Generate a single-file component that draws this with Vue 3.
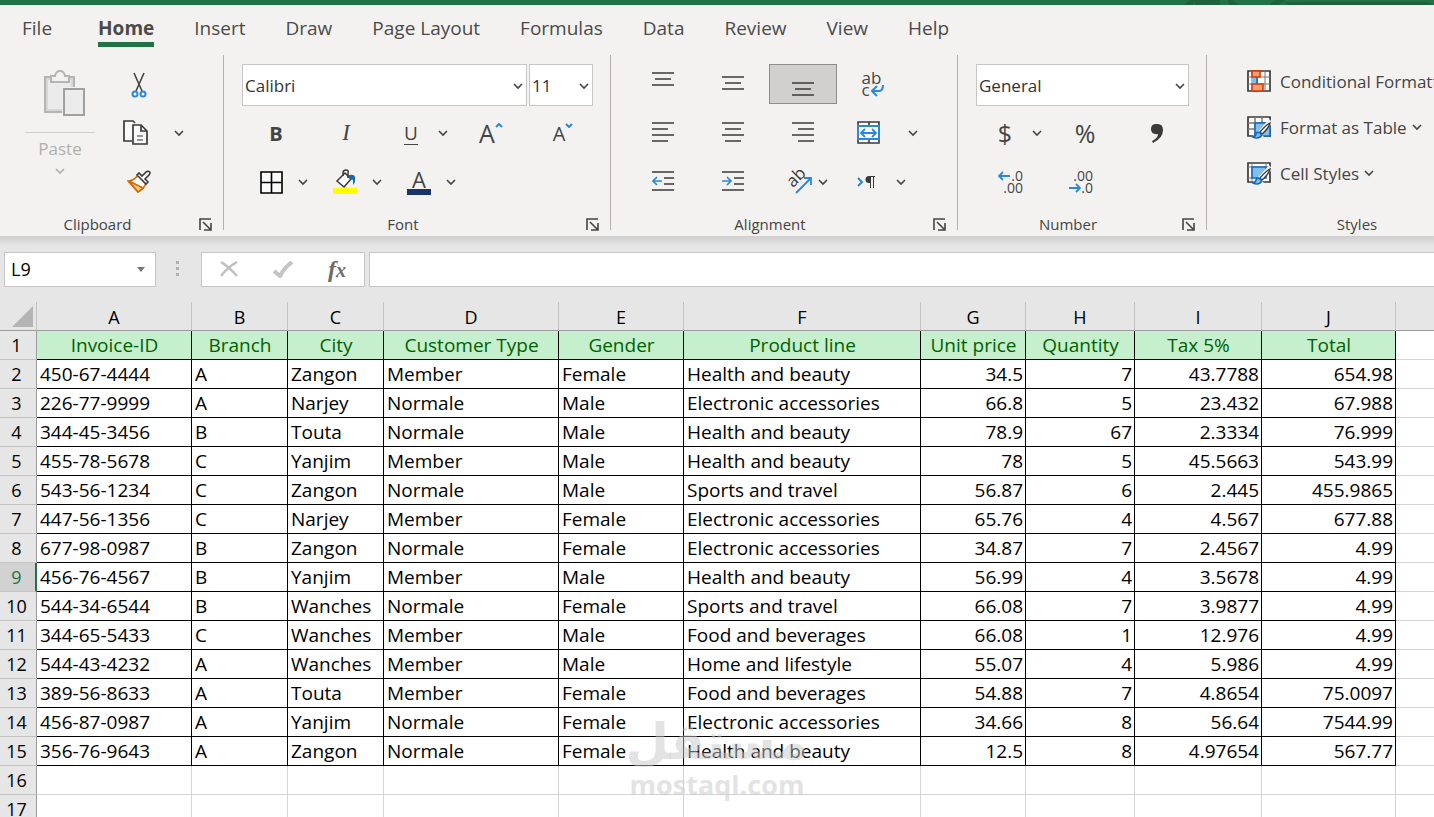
<script setup>
import { ref } from "vue";

const tabs = ["File", "Home", "Insert", "Draw", "Page Layout", "Formulas", "Data", "Review", "View", "Help"];
const activeTab = ref("Home");

const fontName = ref("Calibri");
const fontSize = ref("11");
const numberFormat = ref("General");
const cellName = ref("L9");
const formula = ref("");
const selectedRow = 9;

const columns = ["A", "B", "C", "D", "E", "F", "G", "H", "I", "J"];
const headings = [
  "Invoice-ID",
  "Branch",
  "City",
  "Customer Type",
  "Gender",
  "Product line",
  "Unit price",
  "Quantity",
  "Tax 5%",
  "Total",
];

const rows = [
  ["450-67-4444", "A", "Zangon", "Member", "Female", "Health and beauty", "34.5", "7", "43.7788", "654.98"],
  ["226-77-9999", "A", "Narjey", "Normale", "Male", "Electronic accessories", "66.8", "5", "23.432", "67.988"],
  ["344-45-3456", "B", "Touta", "Normale", "Male", "Health and beauty", "78.9", "67", "2.3334", "76.999"],
  ["455-78-5678", "C", "Yanjim", "Member", "Male", "Health and beauty", "78", "5", "45.5663", "543.99"],
  ["543-56-1234", "C", "Zangon", "Normale", "Male", "Sports and travel", "56.87", "6", "2.445", "455.9865"],
  ["447-56-1356", "C", "Narjey", "Member", "Female", "Electronic accessories", "65.76", "4", "4.567", "677.88"],
  ["677-98-0987", "B", "Zangon", "Normale", "Female", "Electronic accessories", "34.87", "7", "2.4567", "4.99"],
  ["456-76-4567", "B", "Yanjim", "Member", "Male", "Health and beauty", "56.99", "4", "3.5678", "4.99"],
  ["544-34-6544", "B", "Wanches", "Normale", "Female", "Sports and travel", "66.08", "7", "3.9877", "4.99"],
  ["344-65-5433", "C", "Wanches", "Member", "Male", "Food and beverages", "66.08", "1", "12.976", "4.99"],
  ["544-43-4232", "A", "Wanches", "Member", "Male", "Home and lifestyle", "55.07", "4", "5.986", "4.99"],
  ["389-56-8633", "A", "Touta", "Member", "Female", "Food and beverages", "54.88", "7", "4.8654", "75.0097"],
  ["456-87-0987", "A", "Yanjim", "Normale", "Female", "Electronic accessories", "34.66", "8", "56.64", "7544.99"],
  ["356-76-9643", "A", "Zangon", "Normale", "Female", "Health and beauty", "12.5", "8", "4.97654", "567.77"],
];
</script>

<template>
  <div class="excel">
    <div class="title-strip">
      <svg width="250" height="5" viewBox="0 0 250 5" aria-hidden="true">
        <path d="M0 5Q3 1 7 0H15Q10 2 9 5ZM11 5V0H36V5ZM44 0H48Q53 2 54 5H45ZM86 5Q87 1 92 0H100L102 2H240Q246 2 250 5H104Q102 1 98 2L94 5Z" fill="#1f613c" />
      </svg>
    </div>

    <nav class="tabs">
      <a v-for="tab in tabs" :key="tab" href="#" :class="{ active: tab === activeTab }" @click.prevent="activeTab = tab">{{ tab }}</a>
    </nav>

    <div class="ribbon">
      <section class="group clipboard">
        <div class="clipboard-body">
          <button class="paste" aria-label="Paste" disabled>
            <svg class="paste-icon" width="42" height="46" viewBox="0 0 42 46">
              <path d="M2 7H31V42H2Z" fill="#ebebeb" stroke="#b4b4b4" stroke-width="2" />
              <path d="M4 9H29V40H4Z" fill="none" stroke="#d6d6d6" stroke-width="2" />
              <path d="M8 12V6H12Q13 1 17 1T22 6H26V12Z" fill="#f3f2f1" stroke="#b4b4b4" stroke-width="2" />
              <path d="M19 17H42V46H19Z" fill="#f3f2f1" />
              <path d="M21 19H41V45H21Z" fill="#ececec" stroke="#a0a0a0" stroke-width="2" />
            </svg>
            <span class="paste-label">Paste</span>
            <svg class="chev" width="10" height="7" viewBox="0 0 10 7"><path d="M1 1l4 4 4-4" /></svg>
          </button>
          <div class="clipboard-tools">
            <div class="row">
              <button class="btn w60" aria-label="Cut">
                <svg width="16" height="26" viewBox="0 0 16 26">
                  <path d="M3 1L11 19M13 1L5 19" fill="none" stroke="#444" stroke-width="1.600" />
                  <circle cx="4" cy="22" r="2.5" fill="#fff" stroke="#2b88d8" stroke-width="2" />
                  <circle cx="12" cy="22" r="2.5" fill="#fff" stroke="#2b88d8" stroke-width="2" />
                </svg>
              </button>
            </div>
            <div class="row">
              <button class="btn w60" aria-label="Copy">
                <svg width="32" height="26" viewBox="0 0 32 26" fill="#fafafa" stroke="#3b3a39" stroke-width="1.700">
                  <path d="M12 3L10 1H1V21H9" />
                  <path d="M10 5H18L24 11V24H10Z" />
                  <path d="M18 5V11H24" fill="none" />
                  <path d="M14 16H20M14 20H20" stroke="#797775" />
                </svg>
              </button>
              <button class="btn arrow" aria-label="Copy options">
                <svg class="chev" width="10" height="7" viewBox="0 0 10 7"><path d="M1 1l4 4 4-4" /></svg>
              </button>
            </div>
            <div class="row">
              <button class="btn w60" aria-label="Format Painter">
                <svg width="24" height="24" viewBox="0 0 24 24" stroke-width="1.600">
                  <path d="M1 11Q7 11 11 5L19 13Q17 19 11 22Z" fill="#fff" stroke="#d06b0c" />
                  <path d="M2 11L16 18L11 22Z" fill="#fbc97f" stroke="#d06b0c" />
                  <path d="M10 5L19 14L21 12L18 9L22 5Q24 2 22 1.500T19 2L15 6L12 3Z" fill="#fff" stroke="#3b3a39" />
                </svg>
              </button>
            </div>
          </div>
        </div>
        <div class="group-footer">
          <span>Clipboard</span>
          <button class="launcher" aria-label="Clipboard settings">
            <svg width="13" height="13" viewBox="0 0 13 13"><path d="M1 12V1H12M4 4L11 11M12 5V12H5" /></svg>
          </button>
        </div>
      </section>
      <div class="divider"></div>

      <section class="group font-group">
        <div class="row">
          <div class="combo name">
            <select v-model="fontName" aria-label="Font">
              <option>Calibri</option>
            </select>
            <svg class="chev" width="10" height="7" viewBox="0 0 10 7"><path d="M1 1l4 4 4-4" /></svg>
          </div>
          <div class="combo size">
            <select v-model="fontSize" aria-label="Font size">
              <option>11</option>
            </select>
            <svg class="chev" width="10" height="7" viewBox="0 0 10 7"><path d="M1 1l4 4 4-4" /></svg>
          </div>
        </div>
        <div class="row">
          <button class="btn w68 bold">B</button>
          <button class="btn w68 italic">I</button>
          <div class="split indent">
            <button class="btn w44 underline"><span>U</span></button>
            <button class="btn arrow" aria-label="Underline options">
              <svg class="chev" width="10" height="7" viewBox="0 0 10 7"><path d="M1 1l4 4 4-4" /></svg>
            </button>
          </div>
          <button class="btn w68 grow" aria-label="Increase font size">
            <span>A</span>
            <svg width="8" height="5" viewBox="0 0 8 5"><path d="M1 4L4 1L7 4" fill="none" stroke="#2b88d8" stroke-width="2" /></svg>
          </button>
          <button class="btn w68 grow shrink" aria-label="Decrease font size">
            <span>A</span>
            <svg width="8" height="5" viewBox="0 0 8 5"><path d="M1 1L4 4L7 1" fill="none" stroke="#2b88d8" stroke-width="2" /></svg>
          </button>
        </div>
        <div class="row splits">
          <div class="split">
            <button class="btn w44" aria-label="Borders">
              <svg width="24" height="24" viewBox="0 0 24 24"><path d="M2 2H23V23H2ZM12.500 2V23M2 12.500H23" fill="#fafafa" stroke="#000" stroke-width="1.600" /></svg>
            </button>
            <button class="btn arrow" aria-label="Border options">
              <svg class="chev" width="10" height="7" viewBox="0 0 10 7"><path d="M1 1l4 4 4-4" /></svg>
            </button>
          </div>
          <div class="split">
            <button class="btn w44" aria-label="Fill colour">
              <svg width="24" height="26" viewBox="0 0 24 26">
                <path d="M4 12L12 4L18 10L11 18Z" fill="#fff" stroke="#3b3a39" stroke-width="1.500" />
                <path d="M10 7V4Q10 1 13 1T15 4V9" fill="none" stroke="#3b3a39" stroke-width="1.500" />
                <path d="M16 6Q23 5 22 10V13L20 16V11L16 9Z" fill="#0f6cbd" />
                <path d="M0 19H24V25H0Z" fill="#ff0" />
              </svg>
            </button>
            <button class="btn arrow" aria-label="Fill options">
              <svg class="chev" width="10" height="7" viewBox="0 0 10 7"><path d="M1 1l4 4 4-4" /></svg>
            </button>
          </div>
          <div class="split">
            <button class="btn w44 font-color"><span>A</span></button>
            <button class="btn arrow" aria-label="Font colour options">
              <svg class="chev" width="10" height="7" viewBox="0 0 10 7"><path d="M1 1l4 4 4-4" /></svg>
            </button>
          </div>
        </div>
        <div class="group-footer">
          <span>Font</span>
          <button class="launcher" aria-label="Font settings">
            <svg width="13" height="13" viewBox="0 0 13 13"><path d="M1 12V1H12M4 4L11 11M12 5V12H5" /></svg>
          </button>
        </div>
      </section>
      <div class="divider"></div>

      <section class="group alignment">
        <div class="row top">
          <button class="btn w68" aria-label="Top align">
            <svg class="lines" width="22" height="26" viewBox="0 0 22 26"><path d="M0 2H22M3 8H19M0 14H22" /></svg>
          </button>
          <button class="btn w68" aria-label="Middle align">
            <svg class="lines" width="22" height="26" viewBox="0 0 22 26"><path d="M0 6H22M3 12H19M0 18H22" /></svg>
          </button>
          <button class="btn w68 pressed" aria-label="Bottom align">
            <svg class="lines" width="22" height="26" viewBox="0 0 22 26"><path d="M0 12H22M3 18H19M0 24H22" /></svg>
          </button>
          <button class="btn w68 wrap" aria-label="Wrap text">
            <span>ab<br />c</span>
            <svg width="13" height="14" viewBox="0 0 13 14"><path d="M6 2L1 7L6 12M2 7H8Q12 7 12 1" fill="none" stroke="#2b88d8" stroke-width="2" /></svg>
          </button>
        </div>
        <div class="row">
          <button class="btn w68" aria-label="Align left">
            <svg class="lines" width="22" height="22" viewBox="0 0 22 22"><path d="M0 1H22M0 7H16M0 13H22M0 19H16" /></svg>
          </button>
          <button class="btn w68" aria-label="Centre">
            <svg class="lines" width="22" height="22" viewBox="0 0 22 22"><path d="M0 1H22M3 7H19M0 13H22M3 19H19" /></svg>
          </button>
          <button class="btn w68" aria-label="Align right">
            <svg class="lines" width="22" height="22" viewBox="0 0 22 22"><path d="M0 1H22M6 7H22M0 13H22M6 19H22" /></svg>
          </button>
          <button class="btn w60" aria-label="Merge and centre">
            <svg width="24" height="24" viewBox="0 0 24 24" fill="none">
              <path d="M1 1H22V22H1ZM12 1V6M12 17V22" fill="#fafafa" stroke="#3b3a39" stroke-width="1.600" />
              <path d="M1 5H22V18H1Z" fill="#fff" stroke="#2b88d8" stroke-width="2" />
              <path d="M4 12H19M8 8L4 12L8 16M15 8L19 12L15 16" stroke="#2b88d8" stroke-width="1.800" />
            </svg>
          </button>
          <button class="btn arrow" aria-label="Merge options">
            <svg class="chev" width="10" height="7" viewBox="0 0 10 7"><path d="M1 1l4 4 4-4" /></svg>
          </button>
        </div>
        <div class="row">
          <button class="btn w68" aria-label="Decrease indent">
            <svg class="lines" width="22" height="22" viewBox="0 0 22 22">
              <path d="M0 1H22M12 7H22M12 13H22M0 19H22" />
              <path class="blue" d="M1 10H10M5 6L1 10L5 14" />
            </svg>
          </button>
          <button class="btn w68" aria-label="Increase indent">
            <svg class="lines" width="22" height="22" viewBox="0 0 22 22">
              <path d="M0 1H22M12 7H22M12 13H22M0 19H22" />
              <path class="blue" d="M0 10H9M5 6L9 10L5 14" />
            </svg>
          </button>
          <div class="split orientation">
            <button class="btn" aria-label="Orientation">
              <svg width="26" height="24" viewBox="0 0 26 24">
                <text x="-8" y="5" transform="translate(8 9) rotate(-45)" font-size="17" fill="#3b3a39">ab</text>
                <path d="M9 23L24 8M17 8H24V15" fill="none" stroke="#2b88d8" stroke-width="1.800" />
              </svg>
            </button>
            <button class="btn arrow" aria-label="Orientation options">
              <svg class="chev" width="10" height="7" viewBox="0 0 10 7"><path d="M1 1l4 4 4-4" /></svg>
            </button>
          </div>
          <div class="split">
            <button class="btn w52" aria-label="Text direction">
              <svg width="20" height="16" viewBox="0 0 20 16">
                <path d="M3 4L7 8L3 12" fill="none" stroke="#2b88d8" stroke-width="2" />
                <path d="M20 2.500H14M15.500 2V14M18.500 2V14" fill="none" stroke="#3b3a39" stroke-width="1" />
                <path d="M16 2H14Q10.500 2 10.500 5.500T14 9H16Z" fill="#3b3a39" />
              </svg>
            </button>
            <button class="btn arrow" aria-label="Text direction options">
              <svg class="chev" width="10" height="7" viewBox="0 0 10 7"><path d="M1 1l4 4 4-4" /></svg>
            </button>
          </div>
        </div>
        <div class="group-footer">
          <span>Alignment</span>
          <button class="launcher" aria-label="Alignment settings">
            <svg width="13" height="13" viewBox="0 0 13 13"><path d="M1 12V1H12M4 4L11 11M12 5V12H5" /></svg>
          </button>
        </div>
      </section>
      <div class="divider"></div>

      <section class="group number">
        <div class="row">
          <div class="combo format">
            <select v-model="numberFormat" aria-label="Number format">
              <option>General</option>
            </select>
            <svg class="chev" width="10" height="7" viewBox="0 0 10 7"><path d="M1 1l4 4 4-4" /></svg>
          </div>
        </div>
        <div class="row">
          <div class="split indent">
            <button class="btn w44 symbol">$</button>
            <button class="btn arrow" aria-label="Accounting options">
              <svg class="chev" width="10" height="7" viewBox="0 0 10 7"><path d="M1 1l4 4 4-4" /></svg>
            </button>
          </div>
          <button class="btn w72 symbol">%</button>
          <button class="btn w68" aria-label="Comma style">
            <svg width="12" height="20" viewBox="0 0 12 20"><path d="M5 1Q12 0 12 7Q12 15 2 20L1 18Q7 15 7 11Q0 12 0 6Q0 1 5 1Z" fill="#3b3a39" /></svg>
          </button>
        </div>
        <div class="row">
          <button class="btn w68 decimals" aria-label="Increase decimal">
            <span class="line">
              <svg width="13" height="10" viewBox="0 0 13 10"><path d="M12 5H1M5 1L1 5L5 9" /></svg>.0
            </span>
            <span class="line">.00</span>
          </button>
          <button class="btn w68 decimals" aria-label="Decrease decimal">
            <span class="line">.00</span>
            <span class="line">
              <svg width="13" height="10" viewBox="0 0 13 10"><path d="M1 5H12M8 1L12 5L8 9" /></svg>.0
            </span>
          </button>
        </div>
        <div class="group-footer">
          <span>Number</span>
          <button class="launcher" aria-label="Number settings">
            <svg width="13" height="13" viewBox="0 0 13 13"><path d="M1 12V1H12M4 4L11 11M12 5V12H5" /></svg>
          </button>
        </div>
      </section>
      <div class="divider"></div>

      <section class="group styles">
        <div class="style-list">
          <button class="btn style-btn">
            <svg width="26" height="24" viewBox="0 0 26 24">
              <path d="M1 2H23V22H1Z" fill="#fff" stroke="#3b3a39" stroke-width="1.700" />
              <path d="M5 2V22M18 2V22M1 8H23M1 15H23" stroke="#797775" stroke-width="1" />
              <path d="M5 8H11V15H5Z" fill="#83beec" />
              <path d="M10 8V15" stroke="#0f6cbd" stroke-width="1.600" />
              <path d="M5 2H13V8H5ZM5 15H16V22H5Z" fill="#f09e77" stroke="#d83b01" stroke-width="1.600" />
            </svg>
            <span>Conditional Formatting</span>
          </button>
          <button class="btn style-btn">
            <svg width="26" height="24" viewBox="0 0 26 24">
              <path d="M1 2H23V21H1Z" fill="#fff" stroke="#3b3a39" stroke-width="1.700" />
              <path d="M8 2V21M15 2V8M1 8H23M1 14H8" stroke="#797775" stroke-width="1.500" />
              <path d="M8 8H23V21H8Z" fill="#83beec" stroke="#0f6cbd" stroke-width="1.600" />
              <path d="M24 6L13 18M6 23H12L15 20" stroke="#f3f2f1" stroke-width="5" fill="none" />
              <path d="M23 8Q19 10 13 17L15 19Q22 13 23 8Z" fill="#fff" stroke="#3b3a39" stroke-width="1.300" />
              <path d="M6 22Q9 21 9 19Q10 16 13 18T13 22Q10 24 6 22Z" fill="#83beec" stroke="#0f6cbd" stroke-width="1.600" />
            </svg>
            <span>Format as Table</span>
            <svg class="chev" width="10" height="7" viewBox="0 0 10 7"><path d="M1 1l4 4 4-4" /></svg>
          </button>
          <button class="btn style-btn">
            <svg width="26" height="24" viewBox="0 0 26 24">
              <path d="M1 2H23V21H1Z" fill="#fff" stroke="#3b3a39" stroke-width="1.700" />
              <path d="M5 2V21M19 2V6M1 6H23M1 17H5" stroke="#797775" stroke-width="1" />
              <path d="M5 6H19V17H5Z" fill="#83beec" stroke="#0f6cbd" stroke-width="1.600" />
              <path d="M24 6L13 18M6 23H12L15 20" stroke="#f3f2f1" stroke-width="5" fill="none" />
              <path d="M23 8Q19 10 13 17L15 19Q22 13 23 8Z" fill="#fff" stroke="#3b3a39" stroke-width="1.300" />
              <path d="M6 22Q9 21 9 19Q10 16 13 18T13 22Q10 24 6 22Z" fill="#83beec" stroke="#0f6cbd" stroke-width="1.600" />
            </svg>
            <span>Cell Styles</span>
            <svg class="chev" width="10" height="7" viewBox="0 0 10 7"><path d="M1 1l4 4 4-4" /></svg>
          </button>
        </div>
        <div class="group-footer"><span>Styles</span></div>
      </section>
    </div>

    <div class="formula-bar">
      <div class="name-box">
        <input v-model="cellName" type="text" aria-label="Name box" />
        <svg width="8" height="5" viewBox="0 0 8 5"><path d="M0 0H8L4 5Z" fill="#777" /></svg>
      </div>
      <svg class="grip" width="3" height="16" viewBox="0 0 3 16"><path d="M0 0H3V3H0ZM0 6H3V9H0ZM0 12H3V15H0Z" fill="#b0b0b0" /></svg>
      <div class="formula-tools">
        <button aria-label="Cancel">
          <svg width="18" height="16" viewBox="0 0 18 16"><path d="M1 1Q9 6 17 15M17 1Q8 6 1 15" fill="none" stroke="#c0c0c0" stroke-width="2.500" /></svg>
        </button>
        <button aria-label="Enter">
          <svg width="20" height="17" viewBox="0 0 20 17"><path d="M1 10L7 15Q11 7 19 1" fill="none" stroke="#c4c4c4" stroke-width="4" /></svg>
        </button>
        <button class="fx" aria-label="Insert function">f<sub>x</sub></button>
      </div>
      <input v-model="formula" class="formula-input" type="text" aria-label="Formula" />
    </div>

    <main class="sheet">
      <table>
        <colgroup>
          <col class="c-row" />
          <col v-for="c in columns" :key="c" :class="'c-' + c" />
          <col />
        </colgroup>
        <thead>
          <tr>
            <th class="corner"><svg width="21" height="21" viewBox="0 0 21 21"><path d="M21 0V21H0Z" fill="#b4b4b4" /></svg></th>
            <th v-for="c in columns" :key="c">{{ c }}</th>
            <th class="last"></th>
          </tr>
        </thead>
        <tbody>
          <tr class="headings">
            <th>1</th>
            <td v-for="h in headings" :key="h">{{ h }}</td>
            <td class="blank"></td>
          </tr>
          <tr v-for="(row, r) in rows" :key="row[0]" :class="{ selected: r + 2 === selectedRow }">
            <th>{{ r + 2 }}</th>
            <td v-for="(value, i) in row" :key="i" :class="{ num: i > 5 }">{{ value }}</td>
            <td class="blank"></td>
          </tr>
          <tr v-for="n in 2" :key="'empty' + n">
            <th>{{ n + 15 }}</th>
            <td v-for="i in 11" :key="i" class="blank"></td>
          </tr>
        </tbody>
      </table>
    </main>

    <div class="watermark">
      <span class="arabic" lang="ar">مستقل</span>
      <span class="latin">mostaql.com</span>
    </div>
  </div>
</template>

<style>
body {
  margin: 0;
  background: #fff;
}
</style>

<style scoped>
.excel {
  position: relative;
  display: flex;
  flex-direction: column;
  height: 100vh;
  overflow: hidden;
  background: #fff;
  color: #444;
  font-family: "Open Sans", "Noto Sans", sans-serif;
}

button,
input,
select {
  margin: 0;
  padding: 0;
  border: none;
  background: none;
  color: inherit;
  font: inherit;
}

svg {
  flex-shrink: 0;
}

.title-strip {
  display: flex;
  flex-shrink: 0;
  justify-content: flex-end;
  height: 5px;
  background: #217346;
}

.tabs {
  display: flex;
  flex-shrink: 0;
  gap: 40px;
  height: 50px;
  padding: 0 22px;
  background: #f3f2f1;
}

.tabs a {
  height: 37px;
  border-bottom: 5px solid transparent;
  color: #4c4a48;
  font-size: 19px;
  line-height: 46px;
  text-decoration: none;
  white-space: nowrap;
}

.tabs a:first-child {
  margin-right: 6px;
}

.tabs a.active {
  border-color: #217346;
  font-weight: 700;
}

.ribbon {
  display: flex;
  flex-shrink: 0;
  height: 181px;
  overflow: hidden;
  background: #f3f2f1;
}

.divider {
  flex-shrink: 0;
  width: 1px;
  height: 175px;
  background: #b3b0ad;
}

.group {
  display: grid;
  flex-shrink: 0;
  box-sizing: border-box;
  grid-template-rows: 42px 54px 44px 32px;
  padding-top: 9px;
}

.clipboard {
  width: 223px;
}

.font-group {
  width: 386px;
}

.alignment {
  width: 346px;
}

.number {
  width: 248px;
}

.styles {
  width: 300px;
}

.row {
  display: flex;
  align-items: center;
  gap: 2px;
  padding-left: 18px;
}

.row.top {
  align-items: flex-start;
}

.row.splits {
  gap: 10px;
  padding-left: 25px;
}

.split {
  display: flex;
  align-items: center;
}

.split.indent {
  padding-left: 7px;
}

.btn {
  display: flex;
  align-items: center;
  justify-content: center;
  height: 40px;
}

.w44 {
  width: 44px;
}

.w52 {
  width: 52px;
}

.w60 {
  width: 60px;
}

.w68 {
  width: 68px;
}

.w72 {
  width: 72px;
}

.arrow {
  width: 20px;
}

.alignment .w60 + .arrow {
  width: 24px;
}

.chev path {
  fill: none;
  stroke: #444;
  stroke-width: 1.6;
}

.group-footer {
  display: flex;
  align-items: center;
  padding-top: 8px;
  font-size: 15px;
  line-height: 24px;
}

.group-footer span {
  flex: 1;
  text-align: center;
}

.launcher {
  display: flex;
  align-items: center;
  justify-content: center;
  width: 20px;
  margin-right: 8px;
}

.launcher path {
  fill: none;
  stroke: #444;
  stroke-width: 1.6;
}

.clipboard-body {
  display: flex;
  grid-row: 1 / 4;
  gap: 14px;
  padding-left: 25px;
}

.paste {
  display: flex;
  flex-direction: column;
  align-items: center;
  width: 70px;
  padding-top: 6px;
  color: #b1afad;
  font-size: 17px;
}

.paste-icon {
  margin-left: 8px;
}

.paste-label {
  align-self: stretch;
  margin-top: 16px;
  padding-top: 4px;
  border-top: 1px solid #d2d0ce;
  line-height: 24px;
}

.paste .chev {
  margin-top: 7px;
}

.paste .chev path {
  stroke: #b1afad;
}

.clipboard-tools {
  display: grid;
  grid-template-rows: 42px 54px 44px;
}

.clipboard-tools .row {
  gap: 0;
  padding-left: 0;
}

.combo {
  position: relative;
  box-sizing: border-box;
  height: 42px;
  border: 1px solid #c8c6c4;
  background: #fff;
}

.combo select {
  width: 100%;
  height: 100%;
  padding-left: 2px;
  appearance: none;
  color: #333;
  font-size: 17px;
}

.combo .chev {
  position: absolute;
  top: 18px;
  right: 3px;
  pointer-events: none;
}

.combo.name {
  width: 285px;
}

.combo.size {
  width: 64px;
}

.combo.format {
  width: 213px;
}

.bold {
  font-size: 20px;
  font-weight: 700;
}

.italic {
  font-family: "Liberation Serif", serif;
  font-size: 23px;
  font-style: italic;
}

.underline {
  font-size: 19px;
}

.underline span {
  border-bottom: 1px solid #444;
  line-height: 22px;
}

.grow {
  align-items: flex-start;
  margin-left: 2px;
  font-size: 25px;
  line-height: 40px;
}

.grow svg {
  margin-top: 10px;
}

.shrink {
  font-size: 20px;
  line-height: 42px;
}

.font-color {
  font-size: 22px;
  line-height: 20px;
}

.font-color span {
  width: 24px;
  border-bottom: 6px solid #17356b;
}

.pressed {
  box-sizing: border-box;
  border: 1px solid #8f8d8b;
  background: #d2d0ce;
}

.lines path {
  fill: none;
  stroke: #3b3a39;
  stroke-width: 1.7;
}

.lines .blue {
  stroke: #2b88d8;
}

.wrap {
  font-size: 17px;
  line-height: 12px;
  text-align: left;
}

.wrap svg {
  margin-top: 13px;
  margin-left: -10px;
}

.orientation {
  justify-content: flex-end;
  width: 64px;
  padding-right: 4px;
}

.symbol {
  font-size: 25px;
}

.decimals {
  flex-direction: column;
  align-items: center;
  font-size: 14px;
  line-height: 12px;
}

.decimals .line {
  display: flex;
  align-items: center;
  justify-content: flex-end;
  width: 26px;
}

.decimals path {
  fill: none;
  stroke: #2b88d8;
  stroke-width: 1.8;
}

.style-list {
  grid-row: 1 / 4;
  margin-top: -6px;
  padding-left: 40px;
}

.style-btn {
  justify-content: flex-start;
  height: 46px;
  font-size: 17px;
  white-space: nowrap;
}

.style-btn span {
  margin: 0 5px 0 7px;
}

.formula-bar {
  display: flex;
  flex-shrink: 0;
  align-items: center;
  box-sizing: border-box;
  height: 66px;
  padding: 0 0 0 4px;
  background: linear-gradient(#cfcfcf, #e6e6e6 10px);
}

.name-box {
  display: flex;
  align-items: center;
  box-sizing: border-box;
  width: 152px;
  height: 35px;
  padding: 0 10px 0 6px;
  border: 1px solid #c6c6c6;
  background: #fff;
}

.name-box input {
  flex: 1;
  min-width: 0;
  color: #000;
  font-size: 18px;
}

.grip {
  margin: 0 22px 0 20px;
}

.formula-tools {
  display: flex;
  align-items: center;
  justify-content: space-around;
  box-sizing: border-box;
  width: 164px;
  height: 35px;
  border: 1px solid #c6c6c6;
  background: #fff;
}

.formula-tools button {
  display: flex;
  align-items: center;
  justify-content: center;
  width: 40px;
}

.formula-tools .fx {
  align-items: baseline;
  color: #6e6c66;
  font-family: "Liberation Serif", serif;
  font-size: 24px;
  font-style: italic;
  font-weight: 700;
  line-height: 28px;
}

.fx sub {
  font-size: 20px;
  line-height: 20px;
  vertical-align: baseline;
}

.formula-input {
  flex: 1;
  box-sizing: border-box;
  min-width: 0;
  height: 35px;
  margin-left: 4px;
  padding: 0 8px;
  border: 1px solid #c6c6c6;
  border-right: none;
  background: #fff;
}

.sheet table {
  width: 100%;
  border-spacing: 0;
  table-layout: fixed;
  color: #000;
  font-size: 19px;
}

.c-row {
  width: 37px;
}

.c-A {
  width: 155px;
}

.c-B,
.c-C {
  width: 96px;
}

.c-D {
  width: 175px;
}

.c-E {
  width: 125px;
}

.c-F {
  width: 237px;
}

.c-G {
  width: 105px;
}

.c-H {
  width: 109px;
}

.c-I {
  width: 127px;
}

.c-J {
  width: 134px;
}

th,
td {
  box-sizing: border-box;
  height: 29px;
  padding: 1px 2px 0 3px;
  border-right: 1px solid #000;
  border-bottom: 1px solid #000;
  line-height: 27px;
  white-space: nowrap;
}

th {
  padding: 1px 0 0;
  border-right-color: #9b9b9b;
  border-bottom-color: #c4c4c4;
  background: #e6e6e6;
  font-size: 18px;
  font-weight: 400;
}

thead th {
  padding-top: 3px;
  border-right-color: #c4c4c4;
  border-bottom-color: #9b9b9b;
  line-height: 25px;
}

th.last {
  border-right: none;
}

th.corner {
  padding: 0 3px 3px 0;
  line-height: 0;
  text-align: right;
  vertical-align: bottom;
}

tbody th {
  padding-right: 3px;
}

.headings td {
  background: #c6efce;
  color: #006100;
  text-align: center;
}

.num {
  text-align: right;
}

td.blank,
.headings td.blank {
  border-color: #d4d4d4;
  background: #fff;
}

td.blank:last-child {
  border-right: none;
}

.selected th {
  padding-right: 2px;
  border-right: 2px solid #217346;
  background: #d2d2d2;
  color: #217346;
}

.watermark {
  position: absolute;
  top: 714px;
  left: 50%;
  display: flex;
  flex-direction: column;
  align-items: center;
  transform: translateX(-50%);
  color: rgba(200, 200, 200, 0.5);
  font-weight: 700;
  pointer-events: none;
}

.arabic {
  font-family: "DejaVu Sans", sans-serif;
  font-size: 50px;
  line-height: 56px;
}

.latin {
  font-size: 27px;
  line-height: 30px;
}
</style>
